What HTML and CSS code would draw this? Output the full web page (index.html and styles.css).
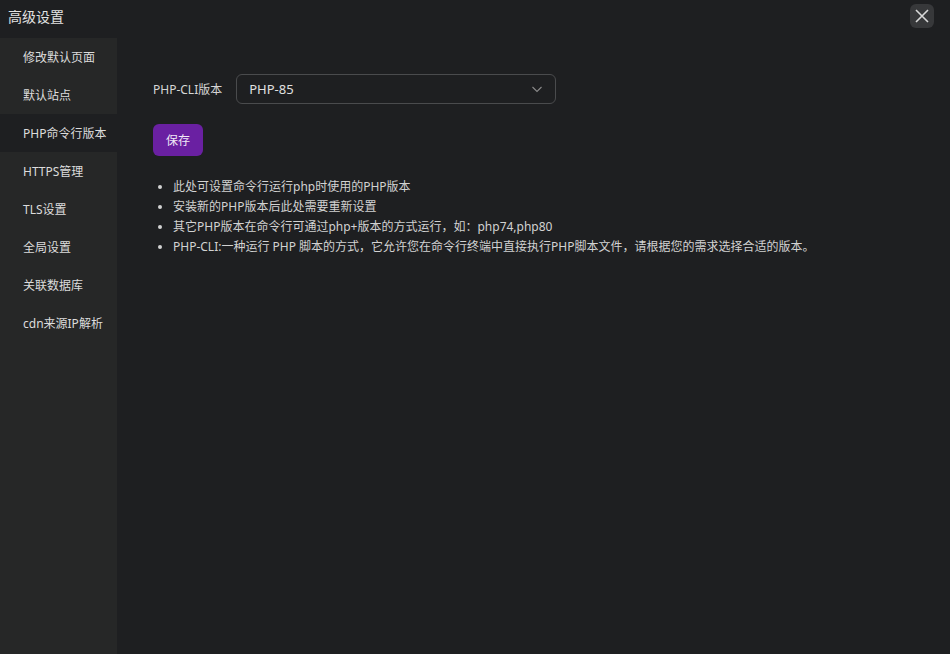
FILE: index.html
```html
<!DOCTYPE html>
<html>
<head>
    <title>高级设置</title>
    <link rel="stylesheet" href="styles.css">
</head>
<body>
    <div class="dialog">
        <div class="dialog-header">
            <span class="dialog-title">高级设置</span>
            <button class="close-button">
                <svg width="16" height="16" viewBox="0 0 16 16"><path d="M2 2L14 14M14 2L2 14" stroke="#d8d8d8" stroke-width="1.6" fill="none"/></svg>
            </button>
        </div>
        <div class="dialog-body">
            <div class="side-menu">
                <a href="#" class="menu-item">修改默认页面</a>
                <a href="#" class="menu-item">默认站点</a>
                <a href="#" class="menu-item active">PHP命令行版本</a>
                <a href="#" class="menu-item">HTTPS管理</a>
                <a href="#" class="menu-item">TLS设置</a>
                <a href="#" class="menu-item">全局设置</a>
                <a href="#" class="menu-item">关联数据库</a>
                <a href="#" class="menu-item">cdn来源IP解析</a>
            </div>
            <div class="content">
                <div class="form-row">
                    <label class="form-label">PHP-CLI版本</label>
                    <div class="select-box">
                        <span>PHP-85</span>
                        <svg width="12" height="12" viewBox="0 0 12 12"><path d="M1.5 4L6 8.5L10.5 4" stroke="#8a8a8a" stroke-width="1.1" fill="none"/></svg>
                    </div>
                </div>
                <button class="save-button">保存</button>
                <ul class="help-list">
                    <li>此处可设置命令行运行php时使用的PHP版本</li>
                    <li>安装新的PHP版本后此处需要重新设置</li>
                    <li>其它PHP版本在命令行可通过php+版本的方式运行，如：php74,php80</li>
                    <li>PHP-CLI:一种运行 PHP 脚本的方式，它允许您在命令行终端中直接执行PHP脚本文件，请根据您的需求选择合适的版本。</li>
                </ul>
            </div>
        </div>
    </div>
</body>
</html>
```

FILE: styles.css
```css
html, body {
    margin: 0;
    height: 100%;
}

body {
    background: #1e1f21;
    font-family: "Noto Sans", "Noto Sans CJK SC", sans-serif;
    font-size: 12px;
    color: #d6d6d6;
}

.dialog {
    display: flex;
    flex-direction: column;
    height: 100%;
}

.dialog-header {
    height: 38px;
    display: flex;
    align-items: center;
    justify-content: space-between;
    padding: 0 16px 0 8px;
    flex-shrink: 0;
}

.dialog-title {
    font-size: 14px;
    color: #e2e2e2;
    margin-top: -6px;
}

.close-button {
    width: 24px;
    height: 24px;
    border: none;
    border-radius: 6px;
    background: #37383a;
    display: flex;
    align-items: center;
    justify-content: center;
    padding: 0;
    margin-top: -7px;
    cursor: pointer;
}

.dialog-body {
    flex: 1;
    display: flex;
}

.side-menu {
    width: 117px;
    background: #262727;
    flex-shrink: 0;
}

.menu-item {
    display: block;
    height: 38px;
    line-height: 40px;
    padding-left: 23px;
    color: #dcdcdc;
    text-decoration: none;
}

.menu-item.active {
    background: #1e1f21;
}

.content {
    flex: 1;
    padding: 36px 36px;
}

.form-row {
    display: flex;
    align-items: center;
    gap: 14px;
}

.form-label {
    color: #d6d6d6;
    margin-top: -1px;
}

.select-box {
    width: 294px;
    height: 28px;
    border: 1px solid #4a4b4d;
    border-radius: 6px;
    display: flex;
    align-items: center;
    justify-content: space-between;
    padding: 0 12px;
    font-size: 13px;
    color: #e0e0e0;
}

.save-button {
    margin-top: 20px;
    width: 50px;
    height: 32px;
    border: none;
    border-radius: 6px;
    background: #6a20a2;
    color: #f0e8f6;
    font-family: inherit;
    font-size: 12px;
    cursor: pointer;
}

.help-list {
    margin: 21px 0 0 0;
    padding-left: 20px;
    line-height: 20px;
    color: #d2d2d2;
}
```
